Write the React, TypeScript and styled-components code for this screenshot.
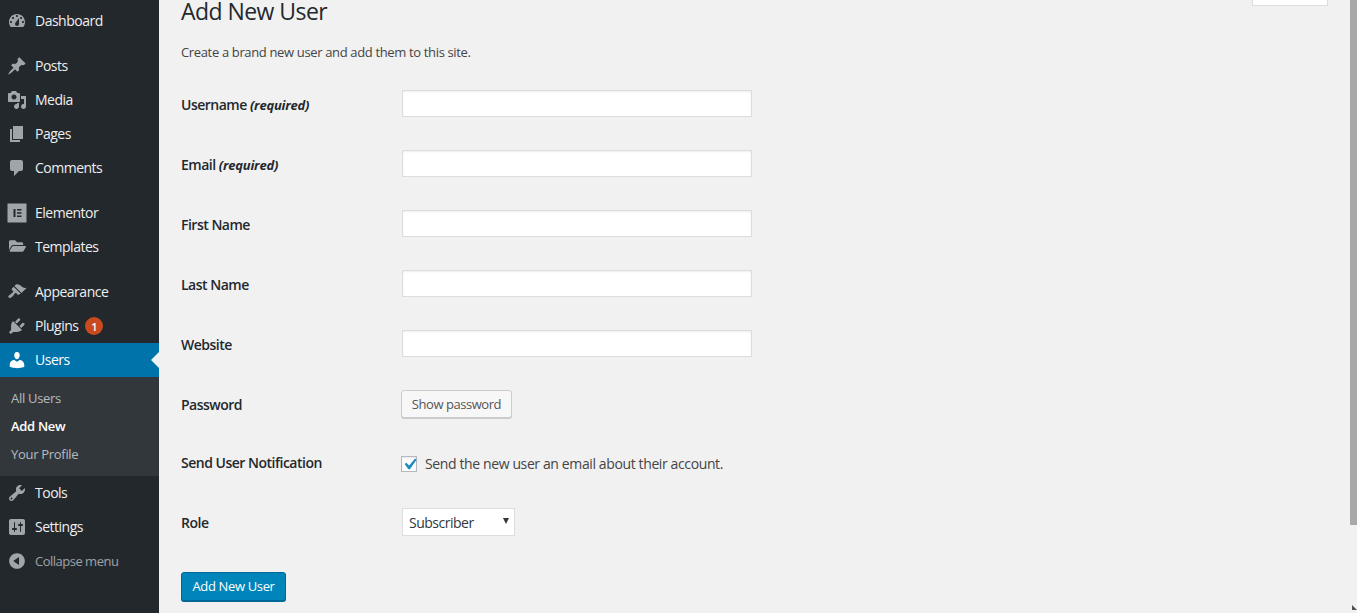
import styled, { createGlobalStyle } from 'styled-components';
import { FaFolderOpen } from 'react-icons/fa';

const GlobalStyle = createGlobalStyle`
    html, body {
        margin: 0;
        padding: 0;
        height: 100%;
        overflow: hidden;
        background: #f1f1f1;
    }
    * {
        box-sizing: border-box;
    }
    body {
        font-family: "Open Sans", "Liberation Sans", sans-serif;
        font-size: 13px;
        color: #23282d;
    }
`;

const Page = styled.div`
    display: flex;
    height: 100vh;
    overflow: hidden;
`;

const Sidebar = styled.nav`
    width: 159px;
    flex-shrink: 0;
    background: #23282d;
    padding-top: 4px;
`;

const MenuGroup = styled.div`
    margin-bottom: 11px;
`;

const MenuItem = styled.div<{ $active?: boolean; $muted?: boolean }>`
    position: relative;
    display: flex;
    align-items: center;
    height: 34px;
    padding-left: 7px;
    gap: 8px;
    font-size: ${p => (p.$muted ? '13px' : '14px')};
    letter-spacing: -.5px;
    color: ${p => (p.$active ? '#fff' : p.$muted ? 'rgba(240,245,250,.6)' : '#eee')};
    background: ${p => (p.$active ? '#0073aa' : 'transparent')};

    svg {
        width: 20px;
        height: 20px;
        flex-shrink: 0;
        fill: ${p => (p.$active ? '#fff' : '#a0a5aa')};
    }
`;

const MenuText = styled.span`
    margin-bottom: 2px;
`;

const FolderIcon = styled(FaFolderOpen)`
    && {
        width: 17px;
        margin: 0 1.5px 2px;
    }
`;

const Notch = styled.span`
    position: absolute;
    right: 0;
    top: 9px;
    border: 8px solid transparent;
    border-right-color: #f1f1f1;
    border-left-width: 0;
`;

const Badge = styled.span`
    width: 18px;
    height: 18px;
    margin-left: -1px;
    border-radius: 50%;
    background: #ca4a1f;
    color: #fff;
    font-size: 11px;
    font-weight: 600;
    letter-spacing: 0;
    display: flex;
    align-items: center;
    justify-content: center;
`;

const SubMenu = styled.div`
    background: #32373c;
    padding: 7px 0 8px;
`;

const SubItem = styled.div<{ $current?: boolean }>`
    height: 28px;
    line-height: 28px;
    padding-left: 11px;
    font-size: 13px;
    letter-spacing: -.3px;
    font-weight: ${p => (p.$current ? 600 : 400)};
    color: ${p => (p.$current ? '#fff' : 'rgba(240,245,250,.7)')};
`;

const Main = styled.main`
    flex: 1;
    padding: 0 22px;
    min-width: 0;
`;

const Header = styled.div`
    display: flex;
    justify-content: space-between;
    align-items: flex-start;
`;

const Title = styled.h1`
    margin: 0;
    font-size: 23px;
    font-weight: 400;
    line-height: 23px;
    letter-spacing: -.55px;
    color: #23282d;
`;

const ScreenOptions = styled.div`
    width: 76px;
    height: 6px;
    background: #fff;
    border: 1px solid #ddd;
    border-top: 0;
`;

const Intro = styled.p`
    margin: 20px 0 0;
    line-height: 18px;
    font-size: 13px;
    letter-spacing: -.35px;
    color: #444;
`;

const Form = styled.form`
    margin-top: 14px;
    display: flex;
    flex-direction: column;
`;

const Row = styled.div`
    display: grid;
    grid-template-columns: 220px 1fr;
    align-items: center;
    height: 60px;
`;

const Label = styled.label`
    margin-bottom: 2px;
    font-size: 14px;
    font-weight: 600;
    letter-spacing: -.5px;
    color: #23282d;

    em {
        font-style: italic;
        font-weight: 700;
        font-size: 13px;
        letter-spacing: -.2px;
    }
`;

const NotificationRow = styled(Row)`
    height: 58px;

    ${Label} {
        margin-bottom: 4px;
    }
`;

const TextInput = styled.input`
    display: block;
    width: 350px;
    height: 27px;
    margin: 0 0 3px 1px;
    background: #fff;
    border: 1px solid #ddd;
    box-shadow: inset 0 1px 2px rgba(0, 0, 0, .07);
    outline: 0;
`;

const SecondaryButton = styled.button`
    display: block;
    width: 111px;
    height: 28px;
    margin-bottom: 2px;
    padding: 0;
    font: inherit;
    letter-spacing: -.45px;
    color: #555;
    background: #f7f7f7;
    border: 1px solid #ccc;
    border-radius: 3px;
    box-shadow: 0 1px 0 #ccc;
`;

const CheckRow = styled.label`
    display: flex;
    align-items: center;
    gap: 8px;
    font-size: 14px;
    letter-spacing: -.38px;
    color: #444;
`;

const CheckText = styled.span`
    margin-bottom: 2px;
`;

const CheckBox = styled.span`
    width: 16px;
    height: 16px;
    background: #fff;
    border: 1px solid #b4b9be;
    box-shadow: inset 0 1px 2px rgba(0, 0, 0, .1);
    display: flex;
    align-items: center;
    justify-content: center;

    svg {
        width: 23px;
        height: 23px;
        flex-shrink: 0;
        fill: #1e8cbe;
    }
`;

const SelectWrap = styled.div`
    position: relative;
    width: 113px;
    height: 28px;
    margin: 0 0 2px 1px;

    &::after {
        content: '';
        position: absolute;
        right: 6px;
        top: 10px;
        border-style: solid;
        border-width: 6px 3.5px 0;
        border-color: #32373c transparent transparent;
    }
`;

const Select = styled.select`
    appearance: none;
    width: 100%;
    height: 100%;
    padding: 0 6px;
    font-family: inherit;
    font-size: 14px;
    letter-spacing: -.5px;
    color: #32373c;
    background: #fff;
    border: 1px solid #ddd;
    border-radius: 0;
    outline: 0;
`;

const PrimaryButton = styled.button`
    display: block;
    width: 105px;
    height: 29px;
    margin-top: 19px;
    padding: 0 0 2px;
    font: inherit;
    letter-spacing: -.35px;
    color: #fff;
    background: #0085ba;
    border: 1px solid #006799;
    border-radius: 3px;
    box-shadow: 0 1px 0 #006799;
`;

const Scrollbar = styled.div`
    width: 7px;
    flex-shrink: 0;
    display: flex;
    flex-direction: column;
    justify-content: space-between;
    align-items: flex-end;
    background: #f1f1f1;
`;

const ScrollThumb = styled.div`
    width: 7px;
    height: 525px;
    background: #a8a8a8;
`;

const ScrollArrow = styled.div`
    width: 0;
    height: 0;
    margin-bottom: 3px;
    border-style: solid;
    border-width: 0 0 5px 5px;
    border-color: transparent transparent #505050 transparent;
    transform: rotate(90deg);
`;

const Icon = ({ d }: { d: string }) => (
    <svg viewBox="0 0 20 20">
        <path fillRule="evenodd" d={d} />
    </svg>
);

const icons = {
    dashboard: 'M3.76 16h12.48c1.1-1.37 1.76-3.11 1.76-5 0-4.42-3.58-8-8-8s-8 3.58-8 8c0 1.89.66 3.63 1.76 5zM10 4c.55 0 1 .45 1 1s-.45 1-1 1-1-.45-1-1 .45-1 1-1zM6 6c.55 0 1 .45 1 1s-.45 1-1 1-1-.45-1-1 .45-1 1-1zm8 0c.55 0 1 .45 1 1s-.45 1-1 1-1-.45-1-1 .45-1 1-1zm-5.37 5.55L12 7v6c0 1.1-.9 2-2 2s-2-.9-2-2c0-.57.24-1.08.63-1.45zM4 10c.55 0 1 .45 1 1s-.45 1-1 1-1-.45-1-1 .45-1 1-1zm12 0c.55 0 1 .45 1 1s-.45 1-1 1-1-.45-1-1 .45-1 1-1z',
    posts: 'M10.44 3.02l1.82-1.82 6.36 6.35-1.83 1.82c-1.05-.68-2.48-.57-3.41.36l-.75.75c-.92.93-1.04 2.35-.35 3.41l-1.83 1.82-2.41-2.41-2.8 2.79c-.42.42-3.38 2.71-3.8 2.29s1.86-3.39 2.28-3.81l2.79-2.79L4.1 9.36l1.83-1.82c1.05.69 2.48.57 3.4-.36l.75-.75c.93-.92 1.05-2.35.36-3.41z',
    media: 'M13 11V4c0-.55-.45-1-1-1h-1.67L9 1H5L3.67 3H2c-.55 0-1 .45-1 1v7c0 .55.45 1 1 1h10c.55 0 1-.45 1-1zM7 4.5c1.38 0 2.5 1.12 2.5 2.5S8.38 9.5 7 9.5 4.5 8.38 4.5 7 5.62 4.5 7 4.5zM14 6h5v10.5c0 1.38-1.12 2.5-2.5 2.5S14 17.88 14 16.5s1.12-2.5 2.5-2.5c.17 0 .34.02.5.05V9h-3V6zm-4 8.05V13h2v3.5c0 1.38-1.12 2.5-2.5 2.5S7 17.88 7 16.5 8.12 14 9.5 14c.17 0 .34.02.5.05z',
    pages: 'M6 15V2h10v13H6zm-1 1h8v2H3V5h2v11z',
    comments: 'M5 2h9c1.1 0 2 .9 2 2v7c0 1.1-.9 2-2 2h-2l-5 5v-5H5c-1.1 0-2-.9-2-2V4c0-1.1.9-2 2-2z',
    elementor: 'M.5.5h19v19H.5zM6.5 6v8h2V6zM10 6v1.6h4.5V6zM10 9.2v1.6h4.5V9.2zM10 12.4V14h4.5v-1.6z',
    appearance: 'M14.48 11.06L7.41 3.99l1.5-1.5c.5-.56 2.3-.47 3.51.32 1.21.8 1.43 1.28 2.91 2.1 1.18.64 2.45 1.26 4.45.85zm-.71.71L6.7 4.7 4.93 6.47c-.39.39-.39 1.02 0 1.41l1.06 1.06c.39.39.39 1.03 0 1.42-.6.6-1.43 1.11-2.21 1.69-.35.26-.7.53-1.01.84C1.43 13.23.75 14.6 1.75 15.6s2.37.32 3.71-1.03c.31-.31.58-.66.84-1.01.58-.78 1.09-1.61 1.69-2.21.39-.39 1.02-.39 1.41 0l1.06 1.06c.39.39 1.02.39 1.41 0z',
    plugins: 'M13.11 4.36L9.87 7.6 8 5.73l3.24-3.24c.35-.34 1.05-.2 1.56.32.52.51.66 1.21.31 1.55zm-8 1.77l.91-1.12 9.01 9.01-1.19.84c-.71.71-2.63 1.16-3.82 1.16H6.14L4.9 17.26c-.59.59-1.54.59-2.12 0-.59-.58-.59-1.53 0-2.12l1.24-1.24v-3.88c0-1.13.4-3.19 1.09-3.89zm7.26 3.97l3.24-3.24c.34-.35 1.04-.21 1.55.31.52.51.66 1.21.31 1.55l-3.24 3.25z',
    users: 'M10 9.25c-2.27 0-2.73-3.44-2.73-3.44C7 4.02 7.82 2 9.97 2c2.16 0 2.98 2.02 2.71 3.81 0 0-.41 3.44-2.68 3.44zm0 2.57L12.72 10c2.39 0 4.52 2.33 4.52 4.53v2.49s-3.65 1.13-7.24 1.13c-3.65 0-7.24-1.13-7.24-1.13v-2.49c0-2.25 1.94-4.48 4.47-4.48z',
    tools: 'M16.68 9.77c-1.34 1.34-3.3 1.67-4.95.99l-5.41 6.52c-.99.99-2.59.99-3.58 0s-.99-2.59 0-3.57l6.52-5.42c-.68-1.65-.35-3.61.99-4.95 1.28-1.28 3.12-1.62 4.72-1.06l-2.89 2.89 2.82 2.82 2.86-2.87c.53 1.58.18 3.39-1.08 4.65zM3.81 16.21c.4.39 1.04.39 1.43 0 .4-.4.4-1.04 0-1.43-.39-.4-1.03-.4-1.43 0-.39.39-.39 1.03 0 1.43z',
    settings: 'M18 16V4c0-1.1-.9-2-2-2H4c-1.1 0-2 .9-2 2v12c0 1.1.9 2 2 2h12c1.1 0 2-.9 2-2zM8 11h1c.55 0 1 .45 1 1s-.45 1-1 1H8v1.5c0 .28-.22.5-.5.5s-.5-.22-.5-.5V13H6c-.55 0-1-.45-1-1s.45-1 1-1h1V5.5c0-.28.22-.5.5-.5s.5.22.5.5V11zm5-2h-1c-.55 0-1-.45-1-1s.45-1 1-1h1V5.5c0-.28.22-.5.5-.5s.5.22.5.5V7h1c.55 0 1 .45 1 1s-.45 1-1 1h-1v5.5c0 .28-.22.5-.5.5s-.5-.22-.5-.5V9z',
    collapse: 'M10 2.16c4.33 0 7.84 3.51 7.84 7.84s-3.51 7.84-7.84 7.84S2.16 14.33 2.16 10 5.71 2.16 10 2.16zm2 11.72V6.12L6.18 9.97z',
    check: 'M14.83 4.89l1.34.94-5.81 8.38H9.02L5.78 9.67l1.34-1.25 2.57 2.4z',
};

function App() {
    return (
        <Page>
            <GlobalStyle />
            <Sidebar>
                <MenuGroup>
                    <MenuItem><Icon d={icons.dashboard} /><MenuText>Dashboard</MenuText></MenuItem>
                </MenuGroup>
                <MenuGroup>
                    <MenuItem><Icon d={icons.posts} /><MenuText>Posts</MenuText></MenuItem>
                    <MenuItem><Icon d={icons.media} /><MenuText>Media</MenuText></MenuItem>
                    <MenuItem><Icon d={icons.pages} /><MenuText>Pages</MenuText></MenuItem>
                    <MenuItem><Icon d={icons.comments} /><MenuText>Comments</MenuText></MenuItem>
                </MenuGroup>
                <MenuGroup>
                    <MenuItem><Icon d={icons.elementor} /><MenuText>Elementor</MenuText></MenuItem>
                    <MenuItem><FolderIcon /><MenuText>Templates</MenuText></MenuItem>
                </MenuGroup>
                <MenuItem><Icon d={icons.appearance} /><MenuText>Appearance</MenuText></MenuItem>
                <MenuItem><Icon d={icons.plugins} /><MenuText>Plugins</MenuText><Badge>1</Badge></MenuItem>
                <MenuItem $active><Icon d={icons.users} /><MenuText>Users</MenuText><Notch /></MenuItem>
                <SubMenu>
                    <SubItem>All Users</SubItem>
                    <SubItem $current>Add New</SubItem>
                    <SubItem>Your Profile</SubItem>
                </SubMenu>
                <MenuItem><Icon d={icons.tools} /><MenuText>Tools</MenuText></MenuItem>
                <MenuItem><Icon d={icons.settings} /><MenuText>Settings</MenuText></MenuItem>
                <MenuItem $muted><Icon d={icons.collapse} />Collapse menu</MenuItem>
            </Sidebar>
            <Main>
                <Header>
                    <Title>Add New User</Title>
                    <ScreenOptions />
                </Header>
                <Intro>Create a brand new user and add them to this site.</Intro>
                <Form onSubmit={e => e.preventDefault()}>
                    <Row>
                        <Label>Username <em>(required)</em></Label>
                        <TextInput type="text" />
                    </Row>
                    <Row>
                        <Label>Email <em>(required)</em></Label>
                        <TextInput type="text" />
                    </Row>
                    <Row>
                        <Label>First Name</Label>
                        <TextInput type="text" />
                    </Row>
                    <Row>
                        <Label>Last Name</Label>
                        <TextInput type="text" />
                    </Row>
                    <Row>
                        <Label>Website</Label>
                        <TextInput type="text" />
                    </Row>
                    <Row>
                        <Label>Password</Label>
                        <div><SecondaryButton type="button">Show password</SecondaryButton></div>
                    </Row>
                    <NotificationRow>
                        <Label>Send User Notification</Label>
                        <CheckRow>
                            <CheckBox><Icon d={icons.check} /></CheckBox>
                            <CheckText>Send the new user an email about their account.</CheckText>
                        </CheckRow>
                    </NotificationRow>
                    <Row>
                        <Label>Role</Label>
                        <SelectWrap>
                            <Select defaultValue="subscriber">
                                <option value="subscriber">Subscriber</option>
                            </Select>
                        </SelectWrap>
                    </Row>
                    <PrimaryButton type="submit">Add New User</PrimaryButton>
                </Form>
            </Main>
            <Scrollbar>
                <ScrollThumb />
                <ScrollArrow />
            </Scrollbar>
        </Page>
    );
}

export default App;
